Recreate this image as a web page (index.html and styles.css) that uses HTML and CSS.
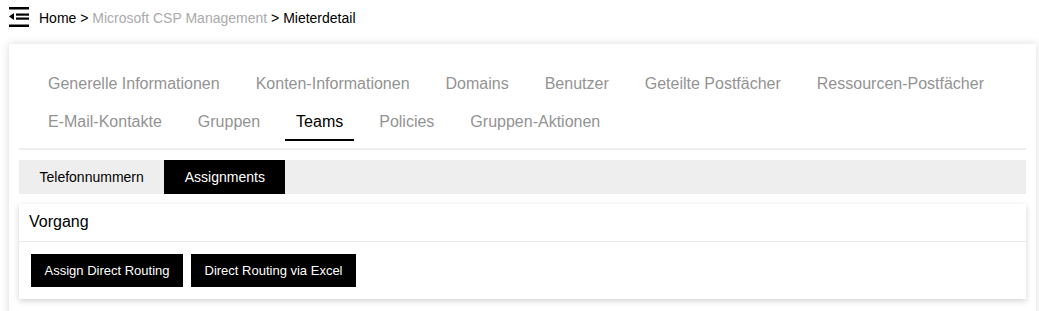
FILE: index.html
```html
<!DOCTYPE html>
<html lang="de">
<head>
    <meta charset="UTF-8">
    <meta name="viewport" content="width=device-width, initial-scale=1.0">
    <title>Mieterdetail</title>
    <link rel="stylesheet" href="styles.css">
</head>
<body>

    <!-- Top bar with menu toggle and breadcrumb -->
    <div class="topbar">
        <svg class="menu-icon" width="20" height="20" viewBox="0 0 20 20">
            <rect x="0" y="0" width="20" height="2.5" fill="#000"/>
            <polygon points="0,9.5 5,6 5,13" fill="#000"/>
            <rect x="7" y="6.5" width="13" height="2.2" fill="#000"/>
            <rect x="7" y="10.5" width="13" height="2.2" fill="#000"/>
            <rect x="0" y="17.5" width="20" height="2.5" fill="#000"/>
        </svg>
        <div class="breadcrumb">
            <span>Home</span> &gt; <span class="muted">Microsoft CSP Management</span> &gt; <span>Mieterdetail</span>
        </div>
    </div>

    <!-- Main card -->
    <div class="card">
        <div class="tabs">
            <div class="tab">Generelle Informationen</div>
            <div class="tab">Konten-Informationen</div>
            <div class="tab">Domains</div>
            <div class="tab">Benutzer</div>
            <div class="tab">Geteilte Postfächer</div>
            <div class="tab">Ressourcen-Postfächer</div>
            <div class="tab">E-Mail-Kontakte</div>
            <div class="tab">Gruppen</div>
            <div class="tab active">Teams</div>
            <div class="tab">Policies</div>
            <div class="tab">Gruppen-Aktionen</div>
        </div>

        <div class="subtabs">
            <div class="subtab">Telefonnummern</div>
            <div class="subtab active">Assignments</div>
        </div>

        <div class="panel">
            <div class="panel-header">Vorgang</div>
            <div class="panel-body">
                <button>Assign Direct Routing</button>
                <button>Direct Routing via Excel</button>
            </div>
        </div>
    </div>

</body>
</html>
```

FILE: styles.css
```css
body {
    font-family: "Liberation Sans", Arial, sans-serif;
    margin: 0;
    background-color: #fff;
    color: #000;
    overflow: hidden;
}

/* Top bar */
.topbar {
    display: flex;
    align-items: center;
    height: 35px;
    padding-left: 9px;
    gap: 10px;
}

.menu-icon {
    display: block;
    margin-top: -1px;
}

.breadcrumb {
    font-size: 14px;
    padding-top: 1px;
}

.breadcrumb .muted {
    color: #aaa;
}

/* Main card */
.card {
    margin: 9px 3px 0 9px;
    padding: 20px 10px;
    background-color: #fff;
    box-shadow: 0 0 8px rgba(0, 0, 0, 0.15);
    height: 400px;
}

.tabs {
    display: flex;
    flex-wrap: wrap;
    column-gap: 14px;
    padding: 1px 0 7px 18px;
    border-bottom: 2px solid #eee;
}

.tab {
    font-size: 16px;
    color: #939393;
    padding: 0 11px;
    height: 38px;
    line-height: 38px;
    box-sizing: border-box;
}

.tab.active {
    color: #000;
    border-bottom: 2px solid #000;
    line-height: 37px;
}

/* Sub tabs */
.subtabs {
    display: flex;
    margin-top: 10px;
    background-color: #eee;
    height: 34px;
}

.subtab {
    font-size: 14px;
    line-height: 34px;
    padding: 0 20.5px;
}

.subtab.active {
    background-color: #000;
    color: #fff;
}

/* Panel */
.panel {
    margin-top: 10px;
    background-color: #fff;
    box-shadow: 0 2px 6px rgba(0, 0, 0, 0.18);
}

.panel-header {
    font-size: 16px;
    height: 37px;
    line-height: 36px;
    padding-left: 10px;
    border-bottom: 1px solid #e8e8e8;
}

.panel-body {
    display: flex;
    gap: 8px;
    padding: 12px;
}

button {
    font-family: "Liberation Sans", Arial, sans-serif;
    font-size: 13px;
    background-color: #000;
    color: #fff;
    border: none;
    height: 33px;
    padding: 0 13.5px;
    cursor: pointer;
}
```
